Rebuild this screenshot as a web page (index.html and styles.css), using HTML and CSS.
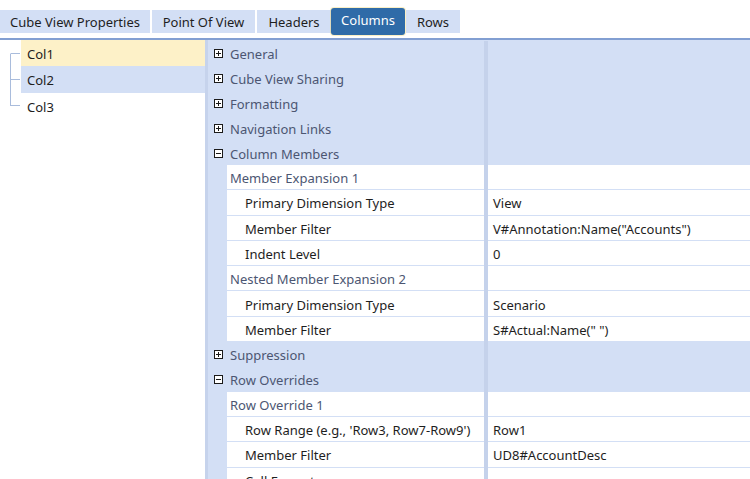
FILE: index.html
```html
<!DOCTYPE html>
<html>
<head>
<meta charset="utf-8">
<link rel="stylesheet" href="styles.css">
</head>
<body>
<div class="app">
  <div class="tabbar">
    <div class="tab t1">Cube View Properties</div>
    <div class="tab t2">Point Of View</div>
    <div class="tab t3">Headers</div>
    <div class="tab active t4">Columns</div>
    <div class="tab t5">Rows</div>
  </div>
  <div class="main">
    <div class="tree">
      <div class="node first selected">
        <div class="conn"><span class="top"></span><span class="bot"></span></div>
        <div class="label">Col1</div>
      </div>
      <div class="node hover">
        <div class="conn"><span class="top"></span><span class="bot"></span></div>
        <div class="label">Col2</div>
      </div>
      <div class="node last">
        <div class="conn"><span class="top"></span><span class="bot"></span></div>
        <div class="label">Col3</div>
      </div>
    </div>
    <div class="grid">
      <div class="row cat"><div class="gut"><svg class="ic" viewBox="0 0 9 9"><rect x="0.5" y="0.5" width="8" height="8" fill="#fff" stroke="#1a1a1a"/><path d="M2 4.5h5M4.5 2v5" stroke="#1a1a1a"/></svg></div><div class="name">General</div><div class="split"></div><div class="val"></div></div>
      <div class="row cat"><div class="gut"><svg class="ic" viewBox="0 0 9 9"><rect x="0.5" y="0.5" width="8" height="8" fill="#fff" stroke="#1a1a1a"/><path d="M2 4.5h5M4.5 2v5" stroke="#1a1a1a"/></svg></div><div class="name">Cube View Sharing</div><div class="split"></div><div class="val"></div></div>
      <div class="row cat"><div class="gut"><svg class="ic" viewBox="0 0 9 9"><rect x="0.5" y="0.5" width="8" height="8" fill="#fff" stroke="#1a1a1a"/><path d="M2 4.5h5M4.5 2v5" stroke="#1a1a1a"/></svg></div><div class="name">Formatting</div><div class="split"></div><div class="val"></div></div>
      <div class="row cat"><div class="gut"><svg class="ic" viewBox="0 0 9 9"><rect x="0.5" y="0.5" width="8" height="8" fill="#fff" stroke="#1a1a1a"/><path d="M2 4.5h5M4.5 2v5" stroke="#1a1a1a"/></svg></div><div class="name">Navigation Links</div><div class="split"></div><div class="val"></div></div>
      <div class="row cat"><div class="gut"><svg class="ic" viewBox="0 0 9 9"><rect x="0.5" y="0.5" width="8" height="8" fill="#fff" stroke="#1a1a1a"/><path d="M2 4.5h5" stroke="#1a1a1a"/></svg></div><div class="name">Column Members</div><div class="split"></div><div class="val"></div></div>
      <div class="row sub"><div class="gut"></div><div class="name">Member Expansion 1</div><div class="split"></div><div class="val"></div></div>
      <div class="row prop"><div class="gut"></div><div class="name">Primary Dimension Type</div><div class="split"></div><div class="val">View</div></div>
      <div class="row prop"><div class="gut"></div><div class="name">Member Filter</div><div class="split"></div><div class="val">V#Annotation:Name("Accounts")</div></div>
      <div class="row prop"><div class="gut"></div><div class="name">Indent Level</div><div class="split"></div><div class="val">0</div></div>
      <div class="row sub"><div class="gut"></div><div class="name">Nested Member Expansion 2</div><div class="split"></div><div class="val"></div></div>
      <div class="row prop"><div class="gut"></div><div class="name">Primary Dimension Type</div><div class="split"></div><div class="val">Scenario</div></div>
      <div class="row prop"><div class="gut"></div><div class="name">Member Filter</div><div class="split"></div><div class="val">S#Actual:Name(" ")</div></div>
      <div class="row cat"><div class="gut"><svg class="ic" viewBox="0 0 9 9"><rect x="0.5" y="0.5" width="8" height="8" fill="#fff" stroke="#1a1a1a"/><path d="M2 4.5h5M4.5 2v5" stroke="#1a1a1a"/></svg></div><div class="name">Suppression</div><div class="split"></div><div class="val"></div></div>
      <div class="row cat"><div class="gut"><svg class="ic" viewBox="0 0 9 9"><rect x="0.5" y="0.5" width="8" height="8" fill="#fff" stroke="#1a1a1a"/><path d="M2 4.5h5" stroke="#1a1a1a"/></svg></div><div class="name">Row Overrides</div><div class="split"></div><div class="val"></div></div>
      <div class="row sub"><div class="gut"></div><div class="name">Row Override 1</div><div class="split"></div><div class="val"></div></div>
      <div class="row prop"><div class="gut"></div><div class="name">Row Range (e.g., 'Row3, Row7-Row9')</div><div class="split"></div><div class="val">Row1</div></div>
      <div class="row prop"><div class="gut"></div><div class="name">Member Filter</div><div class="split"></div><div class="val">UD8#AccountDesc</div></div>
      <div class="row prop"><div class="gut"></div><div class="name">Cell Format</div><div class="split"></div><div class="val"></div></div>
    </div>
  </div>
</div>
</body>
</html>
```
FILE: styles.css
```css
* { box-sizing: border-box; }
html, body { margin: 0; padding: 0; background: #fff; }
body {
  width: 750px;
  height: 479px;
  overflow: hidden;
  font-family: "Segoe UI", "Noto Sans", sans-serif;
  font-size: 13px;
  color: #1e1e1e;
}
.app { display: flex; flex-direction: column; height: 479px; }

.tabbar {
  display: flex;
  align-items: center;
  gap: 2px;
  height: 40px;
  padding: 8px 0 3px 0;
  border-bottom: 2px solid #829fd2;
  flex: none;
}
.tab {
  height: 23px;
  display: flex;
  align-items: center;
  justify-content: center;
  background: #d3dff5;
  color: #1e1e1e;
  white-space: nowrap;
  padding-top: 1px;
}
.t1 { width: 150px; }
.t2 { width: 103px; }
.t3 { width: 74px; margin-right: -2px; }
.t4 { width: 74px; }
.t5 { width: 54px; margin-left: -1px; }
.tab.active {
  height: 27px;
  background: #2f6ba8;
  color: #fff;
  border-radius: 3px;
  box-shadow: 0 0 0 1px rgba(240, 210, 90, 0.35);
  padding-top: 0;
  padding-bottom: 3px;
}

.main { display: flex; flex: 1; min-height: 0; }

.tree { width: 205px; flex: none; background: #fff; }
.node { display: flex; height: 26.3px; }
.conn { width: 21px; flex: none; display: flex; flex-direction: column; padding-left: 10px; }
.conn span { display: block; width: 10px; flex: 1; border-left: 1px solid #a9bcdc; }
.conn .top { border-bottom: 1px solid #a9bcdc; }
.node.first .top { border-left-color: transparent; }
.node.last .bot { border-left-color: transparent; }
.label { flex: 1; display: flex; align-items: center; padding-left: 6px; padding-top: 2px; }
.node.selected .label { background: #fdf1c8; }
.node.hover .label { background: #d3dff5; }

.grid {
  flex: 1;
  background: #d3dff5;
  border-left: 3px solid #c6d3ec;
  display: flex;
  flex-direction: column;
  padding-top: 1px;
}
.row { display: flex; flex: none; }
.row.cat { height: 24.8px; }
.row.sub, .row.prop { height: 25.3px; }
.gut { width: 19px; flex: none; display: flex; align-items: center; padding-left: 6px; padding-top: 1px; }
.ic { width: 9px; height: 9px; display: block; }
.name {
  width: 257px;
  flex: none;
  display: flex;
  align-items: center;
  white-space: nowrap;
  overflow: hidden;
  padding-left: 3px;
  padding-top: 2px;
}
.split { width: 4px; flex: none; background: #c5d2eb; }
.val { flex: 1; display: flex; align-items: center; padding-left: 5px; padding-top: 2px; white-space: nowrap; }
.row.cat .name { color: #4c5672; }
.row.sub .name { color: #4c5672; }
.row.prop .name { padding-left: 18px; }
.row.sub .name, .row.sub .val, .row.prop .name, .row.prop .val {
  background: #fff;
  border-bottom: 1px solid #d3dff5;
}
```
